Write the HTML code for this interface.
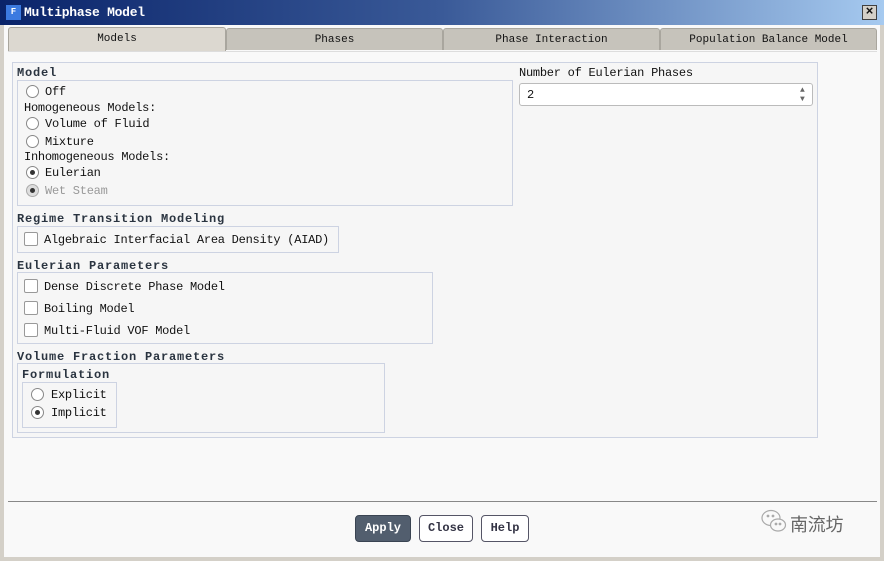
<!DOCTYPE html>
<html><head><meta charset="utf-8"><style>
*{margin:0;padding:0;box-sizing:border-box}
body{width:884px;height:561px;overflow:hidden;background:#d4d0c8;font-family:"Liberation Mono",monospace;font-size:12px;color:#111;position:relative}
.a{position:absolute}
.t{white-space:nowrap;letter-spacing:-0.25px}
.win{left:4px;top:0;width:876px;height:557px;background:#f9f9f9}
.title{left:0;top:0;width:884px;height:25px;background:linear-gradient(90deg,#0a246a 0%,#3a5a98 50%,#a6caf0 100%)}
.tab{top:28px;height:22px;background:#c6c3bb;border:1px solid #a9a69e;border-bottom:none;text-align:center;line-height:22px;font-size:11px;border-radius:3px 3px 0 0}
.box{border:1px solid #cdd3e2}
.h{font-weight:bold;font-family:"Liberation Mono",monospace;font-size:12px;color:#2a3440;letter-spacing:0.8px!important}
.rb{width:13px;height:13px;border:1px solid #888;border-radius:50%;background:#fff}
.rb.on::after{content:"";position:absolute;left:3px;top:3px;width:5px;height:5px;border-radius:50%;background:#333}
.cb{width:14px;height:14px;border:1px solid #999;background:#fff;border-radius:2px}
.btn{top:515px;height:27px;border:1px solid #556;border-radius:4px;font-weight:bold;text-align:center;line-height:25px;background:#fff;color:#334}
</style></head><body>
<div class="a win"></div>
<div class="a title"></div>
<div class="a" style="left:6px;top:5px;width:15px;height:15px;background:#3b7ae0;color:#fff;font-size:9px;font-weight:bold;text-align:center;line-height:15px">F</div>
<div class="a t" style="left:24px;top:5px;color:#fff;font-weight:bold;font-size:13px">Multiphase Model</div>
<div class="a" style="left:862px;top:5px;width:15px;height:15px;background:#d4d0c8;border:1px solid #404040;text-align:center;line-height:12px;font-size:13px;font-weight:bold">×</div>
<div class="a tab" style="left:8px;width:218px;background:#dcd8d0;height:24px;top:27px">Models</div>
<div class="a tab" style="left:226px;width:217px">Phases</div>
<div class="a tab" style="left:443px;width:217px">Phase Interaction</div>
<div class="a tab" style="left:660px;width:217px">Population Balance Model</div>
<div class="a" style="left:8px;top:51px;width:869px;height:1px;background:#ddd"></div>
<div class="a box" style="left:12px;top:62px;width:806px;height:376px;background:#f6f6f6"></div>
<div class="a h t" style="left:17px;top:66px">Model</div>
<div class="a box" style="left:17px;top:80px;width:496px;height:126px"></div>
<div class="a rb" style="left:26px;top:85px"></div><div class="a t" style="left:45px;top:85px">Off</div>
<div class="a t" style="left:24px;top:101px">Homogeneous Models:</div>
<div class="a rb" style="left:26px;top:117px"></div><div class="a t" style="left:45px;top:117px">Volume of Fluid</div>
<div class="a rb" style="left:26px;top:135px"></div><div class="a t" style="left:45px;top:135px">Mixture</div>
<div class="a t" style="left:24px;top:150px">Inhomogeneous Models:</div>
<div class="a rb on" style="left:26px;top:166px"></div><div class="a t" style="left:45px;top:166px">Eulerian</div>
<div class="a rb on" style="left:26px;top:184px;background:#ddd;border-color:#aaa"></div><div class="a t" style="left:45px;top:184px;color:#999">Wet Steam</div>
<div class="a t" style="left:519px;top:66px">Number of Eulerian Phases</div>
<div class="a" style="left:519px;top:83px;width:294px;height:23px;background:#fff;border:1px solid #bbb;border-radius:3px"></div>
<div class="a t" style="left:527px;top:88px">2</div>
<div class="a" style="left:800px;top:86px;font-size:8px;color:#666;line-height:9px">▲<br>▼</div>
<div class="a h t" style="left:17px;top:212px">Regime Transition Modeling</div>
<div class="a box" style="left:17px;top:226px;width:322px;height:27px"></div>
<div class="a cb" style="left:24px;top:232px"></div><div class="a t" style="left:44px;top:233px">Algebraic Interfacial Area Density (AIAD)</div>
<div class="a h t" style="left:17px;top:259px">Eulerian Parameters</div>
<div class="a box" style="left:17px;top:272px;width:416px;height:72px"></div>
<div class="a cb" style="left:24px;top:279px"></div><div class="a t" style="left:44px;top:280px">Dense Discrete Phase Model</div>
<div class="a cb" style="left:24px;top:301px"></div><div class="a t" style="left:44px;top:302px">Boiling Model</div>
<div class="a cb" style="left:24px;top:323px"></div><div class="a t" style="left:44px;top:324px">Multi-Fluid VOF Model</div>
<div class="a h t" style="left:17px;top:350px">Volume Fraction Parameters</div>
<div class="a box" style="left:17px;top:363px;width:368px;height:70px"></div>
<div class="a h t" style="left:22px;top:368px">Formulation</div>
<div class="a box" style="left:22px;top:382px;width:95px;height:46px"></div>
<div class="a rb" style="left:31px;top:388px"></div><div class="a t" style="left:51px;top:388px">Explicit</div>
<div class="a rb on" style="left:31px;top:406px"></div><div class="a t" style="left:51px;top:406px">Implicit</div>
<div class="a" style="left:8px;top:501px;width:869px;height:1px;background:#888"></div>
<div class="a btn" style="left:355px;width:56px;background:#525e6e;color:#fff;border-color:#3a4452">Apply</div>
<div class="a btn" style="left:419px;width:54px">Close</div>
<div class="a btn" style="left:481px;width:48px">Help</div>
<svg class="a" style="left:760px;top:508px" width="28" height="28" viewBox="0 0 28 28" fill="none" stroke="#aaa" stroke-width="1.2"><ellipse cx="11" cy="10" rx="9" ry="7.5"/><ellipse cx="18" cy="17" rx="7.5" ry="6" fill="#f9f9f9"/><circle cx="8" cy="8" r=".8" fill="#aaa"/><circle cx="13" cy="8" r=".8" fill="#aaa"/><circle cx="16" cy="16" r=".8" fill="#aaa"/><circle cx="20" cy="16" r=".8" fill="#aaa"/></svg>
<div class="a t" style="left:790px;top:511px;font-family:'Noto Sans CJK SC',sans-serif;font-size:18px;color:#666">南流坊</div>
</body></html>
